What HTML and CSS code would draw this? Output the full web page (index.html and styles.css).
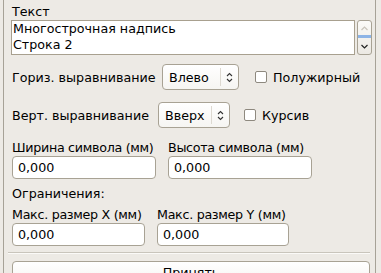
FILE: index.html
```html
<!DOCTYPE html>
<html lang="ru">
<head>
    <meta charset="UTF-8">
    <title>Свойства надписи</title>
    <link rel="stylesheet" href="styles.css">
</head>
<body>
    <div class="panel">
        <!-- Text block -->
        <div class="label">Текст</div>
        <div class="text-row">
            <div class="textarea">Многострочная надпись<br>Строка 2</div>
            <div class="spin">
                <svg width="13" height="33" viewBox="0 0 13 33">
                    <path d="M3.5 9 L6.5 6 L9.5 9" fill="none" stroke="#c9c4ba" stroke-width="1.2"/>
                    <rect x="0" y="14" width="13" height="3" fill="#8db4e6"/>
                    <path d="M3.5 24 L6.5 27 L9.5 24" fill="none" stroke="#222" stroke-width="1.2"/>
                </svg>
            </div>
        </div>

        <!-- Alignment -->
        <div class="row row-h">
            <span class="row-label">Гориз. выравнивание</span>
            <div class="combo combo-h">
                <span class="combo-text">Влево</span>
                <span class="combo-arrows">
                    <svg width="7" height="11" viewBox="0 0 7 11"><path d="M1 4 L3.5 1.5 L6 4 M1 7 L3.5 9.5 L6 7" fill="none" stroke="#333" stroke-width="1.1"/></svg>
                </span>
            </div>
            <label class="check"><span class="box"></span>Полужирный</label>
        </div>
        <div class="row row-v">
            <span class="row-label">Верт. выравнивание</span>
            <div class="combo combo-v">
                <span class="combo-text">Вверх</span>
                <span class="combo-arrows">
                    <svg width="7" height="11" viewBox="0 0 7 11"><path d="M1 4 L3.5 1.5 L6 4 M1 7 L3.5 9.5 L6 7" fill="none" stroke="#333" stroke-width="1.1"/></svg>
                </span>
            </div>
            <label class="check"><span class="box"></span>Курсив</label>
        </div>

        <!-- Symbol size -->
        <div class="fields fields-size">
            <div class="field w144">
                <div class="label">Ширина символа (мм)</div>
                <div class="input">0,000</div>
            </div>
            <div class="field w144">
                <div class="label">Высота символа (мм)</div>
                <div class="input">0,000</div>
            </div>
        </div>

        <div class="label limits">Ограничения:</div>
        <div class="fields fields-max">
            <div class="field w133">
                <div class="label">Макс. размер X (мм)</div>
                <div class="input">0,000</div>
            </div>
            <div class="field w132">
                <div class="label">Макс. размер Y (мм)</div>
                <div class="input">0,000</div>
            </div>
        </div>

        <div class="separator"></div>
        <div class="button">Принять</div>
    </div>
</body>
</html>
```
FILE: styles.css
```css
* {
    margin: 0;
    padding: 0;
    box-sizing: border-box;
}

body {
    background-color: #edeae5;
    font-family: "DejaVu Sans", sans-serif;
    font-size: 12.7px;
    color: #000;
    overflow: hidden;
}

/* Outer panel with side borders */
.panel {
    margin-left: 3px;
    width: 373px;
    height: 273px;
    border-left: 1px solid #a7a297;
    border-right: 1px solid #a7a297;
    padding: 4px 0 0 8px;
    overflow: hidden;
}

.label {
    height: 15px;
    line-height: 15px;
    white-space: nowrap;
}

/* Text area */
.text-row {
    display: flex;
    margin-top: 1px;
    margin-left: -1px;
}

.textarea {
    width: 344px;
    height: 35px;
    background: #fff;
    border: 1px solid #a8a08f;
    padding: 0 0 0 1px;
    line-height: 16px;
}

.spin {
    width: 15px;
    height: 35px;
    margin-left: 2px;
    border: 1px solid #a8a294;
    border-radius: 3px;
    background: linear-gradient(#fbfaf8, #ece9e3);
    overflow: hidden;
}

.spin svg {
    display: block;
}

/* Alignment rows */
.row {
    display: flex;
    align-items: center;
    height: 26px;
    white-space: nowrap;
}

.row-h {
    margin-top: 9px;
}

.row-v {
    margin-top: 12px;
}

.row-h .row-label {
    width: 150px;
}

.row-v .row-label {
    width: 146px;
}

.combo {
    height: 26px;
    border: 1px solid #a8a294;
    border-radius: 4px;
    background: linear-gradient(#ffffff, #f6f5f2);
    display: flex;
    align-items: center;
    padding-left: 6px;
}

.combo-h {
    width: 77px;
}

.combo-v {
    width: 72px;
}

.combo-text {
    flex: 1;
}

.combo-arrows {
    width: 18px;
    height: 18px;
    border-left: 1px solid #ddd9d1;
    display: flex;
    align-items: center;
    justify-content: center;
}

.check {
    display: flex;
    align-items: center;
    margin-left: 16px;
}

.row-v .check {
    margin-left: 14px;
}

.box {
    width: 12px;
    height: 12px;
    border: 1px solid #8e897f;
    border-radius: 2px;
    background: #fff;
    margin-right: 6px;
}

/* Numeric fields */
.fields {
    display: flex;
    gap: 12px;
}

.fields-size {
    margin-top: 12px;
}

.fields-max {
    margin-top: 6px;
}

.field {
    flex-shrink: 0;
}

.field .label {
    margin-bottom: 1px;
    letter-spacing: -0.3px;
}

.input {
    height: 23px;
    background: #fff;
    border: 1px solid #a8a294;
    border-radius: 4px;
    padding-left: 5px;
    line-height: 21px;
}

.w144 {
    width: 144px;
}

.w133 {
    width: 133px;
}

.w132 {
    width: 132px;
}

.limits {
    margin-top: 7px;
}

.separator {
    margin: 6px 0 0 -4px;
    width: 362px;
    border-top: 1px solid #c9c5bc;
    border-bottom: 1px solid #fbfaf8;
}

.button {
    margin-top: 7px;
    width: 358px;
    height: 28px;
    background: linear-gradient(#ffffff, #f3f1ed);
    border: 1px solid #a8a294;
    border-radius: 4px;
    text-align: center;
    line-height: 22px;
}
```
